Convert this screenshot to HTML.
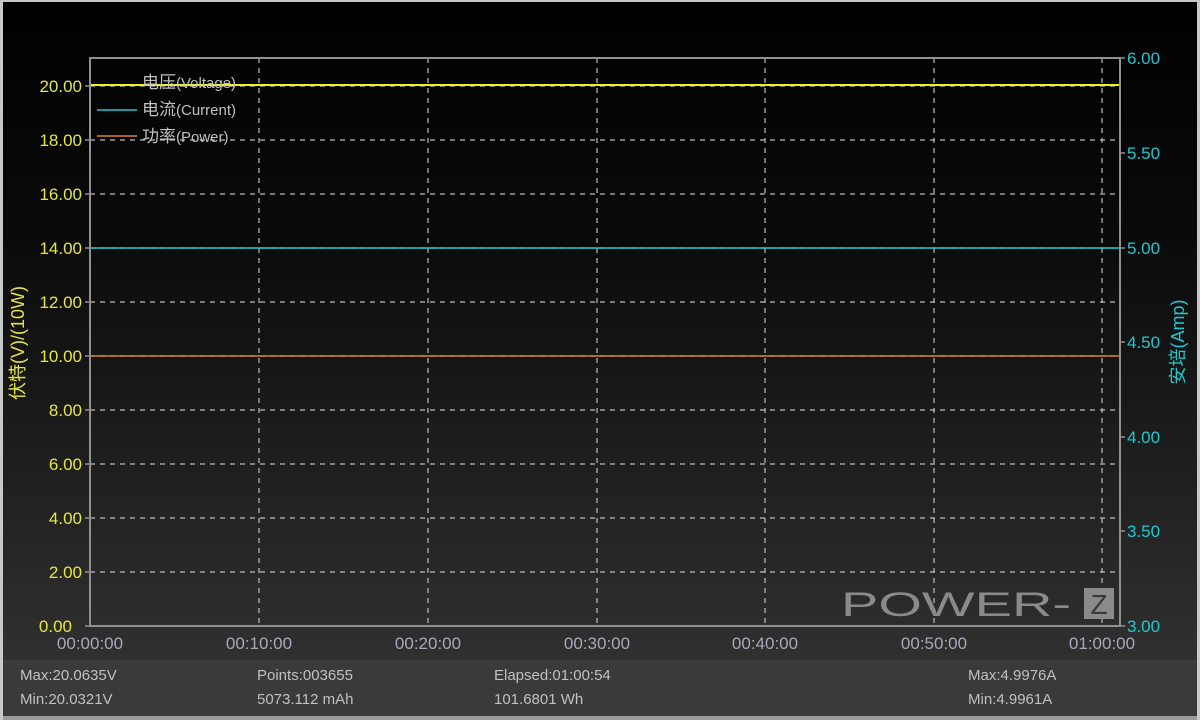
<!DOCTYPE html>
<html><head><meta charset="utf-8"><style>
html,body{margin:0;padding:0;width:1200px;height:720px;overflow:hidden;background:#000}
svg{display:block}
text{font-family:"Liberation Sans","Noto Sans CJK SC",sans-serif}
</style></head><body>
<svg width="1200" height="720" viewBox="0 0 1200 720" xmlns="http://www.w3.org/2000/svg">
<defs>
<linearGradient id="bg" x1="0" y1="0" x2="0" y2="1">
<stop offset="0" stop-color="#000"/>
<stop offset="0.35" stop-color="#0a0a0a"/>
<stop offset="1" stop-color="#303030"/>
</linearGradient>
</defs>
<rect x="0" y="0" width="1200" height="720" fill="#c8c8c8"/>
<rect x="3" y="2" width="1194" height="658" fill="url(#bg)"/>
<rect x="3" y="660" width="1194" height="56" fill="#3a3a3a"/>
<rect x="3" y="716" width="1194" height="4" fill="#9a9a9a"/>
<g stroke="#bdbdbd" stroke-width="1.2" stroke-dasharray="5,5" fill="none">
<line x1="90" y1="86" x2="1119" y2="86"/>
<line x1="90" y1="140" x2="1119" y2="140"/>
<line x1="90" y1="194" x2="1119" y2="194"/>
<line x1="90" y1="248" x2="1119" y2="248"/>
<line x1="90" y1="302" x2="1119" y2="302"/>
<line x1="90" y1="356" x2="1119" y2="356"/>
<line x1="90" y1="410" x2="1119" y2="410"/>
<line x1="90" y1="464" x2="1119" y2="464"/>
<line x1="90" y1="518" x2="1119" y2="518"/>
<line x1="90" y1="572" x2="1119" y2="572"/>
<line x1="259" y1="58" x2="259" y2="626"/>
<line x1="428" y1="58" x2="428" y2="626"/>
<line x1="597" y1="58" x2="597" y2="626"/>
<line x1="765" y1="58" x2="765" y2="626"/>
<line x1="934" y1="58" x2="934" y2="626"/>
<line x1="1102" y1="58" x2="1102" y2="626"/>
</g>
<g>
<text x="841" y="616" font-size="34" fill="#8a8a8a" textLength="230" lengthAdjust="spacingAndGlyphs">POWER-</text>
<rect x="1084" y="588" width="30" height="31" fill="#8a8a8a"/>
<text x="1099" y="614" font-size="28" fill="#3a3a3a" text-anchor="middle">Z</text>
</g>
<line x1="90" y1="85" x2="1119" y2="85" stroke="#f0f020" stroke-width="2"/>
<line x1="90" y1="248" x2="1119" y2="248" stroke="#20c8d0" stroke-width="1.5"/>
<line x1="90" y1="356" x2="1119" y2="356" stroke="#e0803a" stroke-width="1.5"/>
<rect x="90" y="58" width="1030" height="568" fill="none" stroke="#909090" stroke-width="2"/>
<g stroke="#909090" stroke-width="1.5">
<line x1="85" y1="86" x2="90" y2="86"/><line x1="85" y1="140" x2="90" y2="140"/><line x1="85" y1="194" x2="90" y2="194"/><line x1="85" y1="248" x2="90" y2="248"/><line x1="85" y1="302" x2="90" y2="302"/><line x1="85" y1="356" x2="90" y2="356"/><line x1="85" y1="410" x2="90" y2="410"/><line x1="85" y1="464" x2="90" y2="464"/><line x1="85" y1="518" x2="90" y2="518"/><line x1="85" y1="572" x2="90" y2="572"/><line x1="85" y1="626" x2="90" y2="626"/>
<line x1="1120" y1="58" x2="1125" y2="58"/><line x1="1120" y1="153" x2="1125" y2="153"/><line x1="1120" y1="248" x2="1125" y2="248"/><line x1="1120" y1="342" x2="1125" y2="342"/><line x1="1120" y1="437" x2="1125" y2="437"/><line x1="1120" y1="531" x2="1125" y2="531"/><line x1="1120" y1="626" x2="1125" y2="626"/>
</g>
<line x1="97" y1="110" x2="137" y2="110" stroke="#20c8d0" stroke-width="1.5"/>
<line x1="97" y1="136" x2="137" y2="136" stroke="#e0803a" stroke-width="1.5"/>
<g fill="#c0c0c0" font-size="15">
<text x="142" y="88"><tspan font-size="17">电压</tspan>(Voltage)</text>
<text x="142" y="115"><tspan font-size="17">电流</tspan>(Current)</text>
<text x="142" y="142"><tspan font-size="17">功率</tspan>(Power)</text>
</g>
<g fill="#e6e640" font-size="17" text-anchor="end">
<text x="82" y="92">20.00</text><text x="82" y="146">18.00</text><text x="82" y="200">16.00</text><text x="82" y="254">14.00</text><text x="82" y="308">12.00</text><text x="82" y="362">10.00</text><text x="82" y="416">8.00</text><text x="82" y="470">6.00</text><text x="82" y="524">4.00</text><text x="82" y="578">2.00</text><text x="72" y="632">0.00</text>
</g>
<text transform="translate(24,343) rotate(-90)" fill="#e6e640" font-size="18" text-anchor="middle">伏特(V)/(10W)</text>
<g fill="#20c8d0" font-size="17">
<text x="1127" y="64">6.00</text><text x="1127" y="159">5.50</text><text x="1127" y="254">5.00</text><text x="1127" y="348">4.50</text><text x="1127" y="443">4.00</text><text x="1127" y="537">3.50</text><text x="1127" y="632">3.00</text>
</g>
<text transform="translate(1184,342) rotate(-90)" fill="#20c8d0" font-size="18" text-anchor="middle">安培(Amp)</text>
<g fill="#a8a8b8" font-size="17" text-anchor="middle">
<text x="90" y="649">00:00:00</text><text x="259" y="649">00:10:00</text><text x="428" y="649">00:20:00</text><text x="597" y="649">00:30:00</text><text x="765" y="649">00:40:00</text><text x="934" y="649">00:50:00</text><text x="1102" y="649">01:00:00</text>
</g>
<g fill="#c0c0c0" font-size="15">
<text x="20" y="680">Max:20.0635V</text><text x="20" y="704">Min:20.0321V</text>
<text x="257" y="680">Points:003655</text><text x="257" y="704">5073.112 mAh</text>
<text x="494" y="680">Elapsed:01:00:54</text><text x="494" y="704">101.6801 Wh</text>
<text x="968" y="680">Max:4.9976A</text><text x="968" y="704">Min:4.9961A</text>
</g>
</svg>
</body></html>
